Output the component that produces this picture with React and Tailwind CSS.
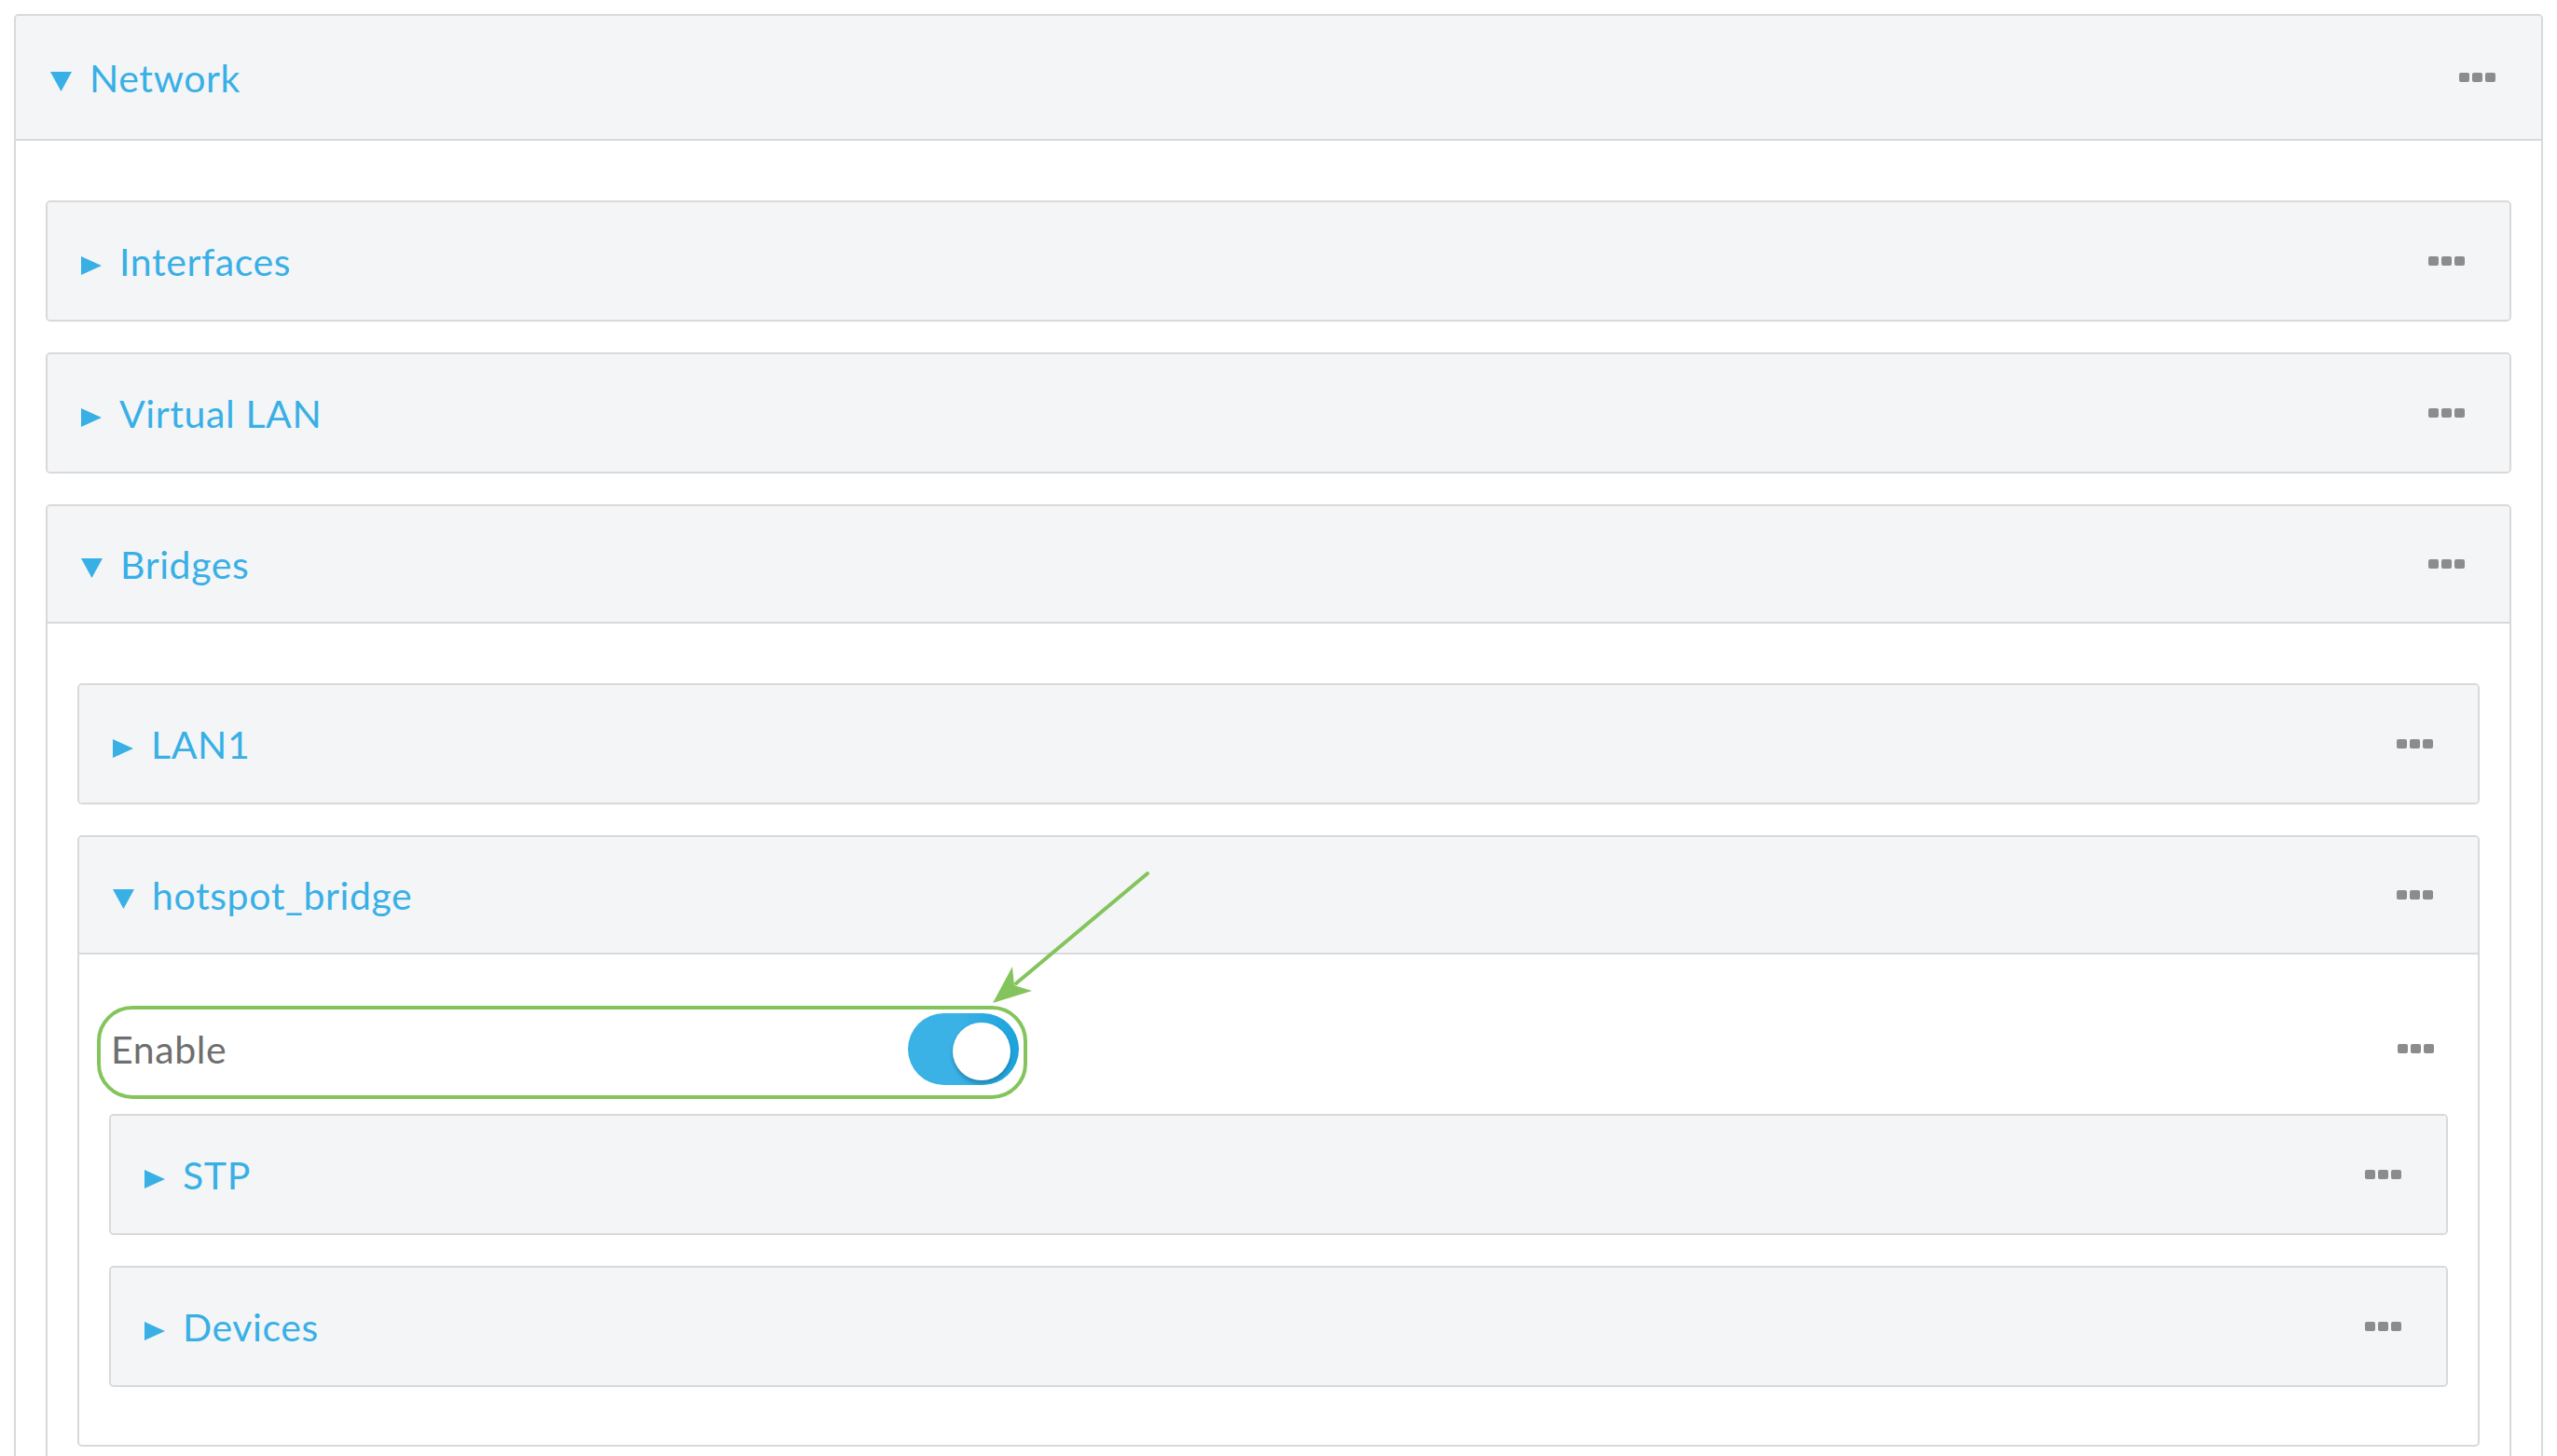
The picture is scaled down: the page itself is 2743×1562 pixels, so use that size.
import React from "react";

const FONT = { fontFamily: "Lato, 'Open Sans', sans-serif" };

function Dots() {
  return (
    <div className="flex gap-[3px]">
      <span className="block h-[10px] w-[11px] rounded-[2px] bg-[#8c8c8c]" />
      <span className="block h-[10px] w-[11px] rounded-[2px] bg-[#8c8c8c]" />
      <span className="block h-[10px] w-[11px] rounded-[2px] bg-[#8c8c8c]" />
    </div>
  );
}

function Caret({ open }) {
  if (open) {
    return (
      <svg width="23" height="21" viewBox="0 0 23 21" className="mt-[9px] shrink-0">
        <polygon points="0,0 23,0 11.5,21" fill="#38b0e6" />
      </svg>
    );
  }
  return (
    <svg width="22" height="20" viewBox="0 0 22 20" className="mt-[9px] shrink-0">
      <polygon points="0,0 22,10 0,20" fill="#38b0e6" />
    </svg>
  );
}

function Panel({ title, open, top, children }) {
  return (
    <div className="rounded-[5px] border-2 border-[#d9d9d9] bg-white">
      <div
        className={
          open
            ? top
              ? "flex h-[134px] items-center justify-between rounded-t-[3px] border-b-2 border-[#d9d9d9] bg-[#f4f5f7] pl-[37px] pr-[49px]"
              : "flex h-[126px] items-center justify-between rounded-t-[3px] border-b-2 border-[#d9d9d9] bg-[#f4f5f7] pl-[36px] pr-[48px]"
            : "flex h-[126px] items-center justify-between rounded-[3px] bg-[#f4f5f7] pl-[36px] pr-[48px]"
        }
      >
        <div className="flex items-center gap-[19px]">
          <Caret open={open} />
          <span className="text-[41px] leading-none tracking-[0.6px] text-[#38b0e6]" style={FONT}>
            {title}
          </span>
        </div>
        <Dots />
      </div>
      {open && (
        <div className="flex flex-col gap-[33px] px-[32px] pb-[62px] pt-[64px]">{children}</div>
      )}
    </div>
  );
}

function EnableRow() {
  return (
    <div className="relative flex h-[74px] items-center pr-[15px]">
      <div className="absolute left-[-13px] top-[-9px] h-[100px] w-[998px] rounded-[38px] border-4 border-[#84c45c]" />
      <svg
        className="absolute left-[933px] top-[-159px]"
        width="190"
        height="155"
        viewBox="0 0 190 155"
      >
        <line x1="181" y1="8" x2="40" y2="126" stroke="#84c45c" strokeWidth="4" strokeLinecap="round" />
        <polygon points="15,147 36,108 38,128 57,134" fill="#84c45c" />
      </svg>
      <span className="w-[857px] pl-[2px] text-[41px] leading-none tracking-[0.6px] text-[#6e6e6e]" style={FONT}>
        Enable
      </span>
      <div className="relative h-[77px] w-[119px] rounded-full bg-[linear-gradient(90deg,#3ab2e6_0%,#3ab2e6_45%,#1ca3dc_100%)]">
        <div className="absolute right-[9px] top-[10px] h-[62px] w-[62px] rounded-full bg-white shadow-[0_3px_4px_rgba(0,0,0,0.25)]" />
      </div>
      <div className="flex-1" />
      <Dots />
    </div>
  );
}

export default function App() {
  return (
    <div className="h-[1562px] w-full overflow-hidden bg-white px-[15px] pt-[15px]">
      <Panel title="Network" open top>
        <Panel title="Interfaces" />
        <Panel title="Virtual LAN" />
        <Panel title="Bridges" open>
          <Panel title="LAN1" />
          <Panel title="hotspot_bridge" open>
            <EnableRow />
            <Panel title="STP" />
            <Panel title="Devices" />
          </Panel>
        </Panel>
      </Panel>
    </div>
  );
}
